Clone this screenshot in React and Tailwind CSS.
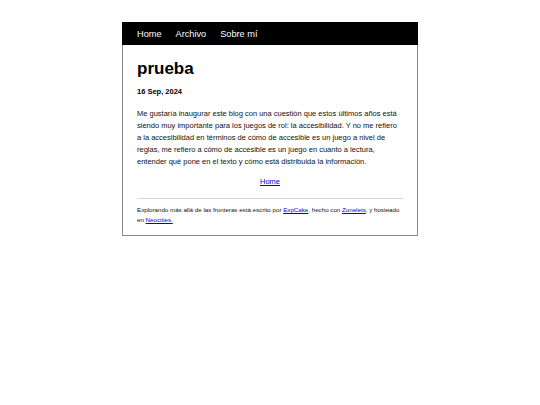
export default function App() {
  return (
    <div className="w-[540px] h-[405px] bg-white" style={{ fontFamily: '"Liberation Sans", Arial, sans-serif' }}>
      <div className="pt-[22px] flex justify-center">
        <div className="w-[296px] border border-[#8a8a8a] bg-white text-[#111]">
          <nav className="h-[23px] bg-black flex items-center px-[14px] gap-[14px] text-white text-[9.2px] -mt-px -mx-px border-t border-black">
            <a className="ml-px pt-px">Home</a>
            <a className="pt-px">Archivo</a>
            <a className="pt-px">Sobre mí</a>
          </nav>
          <div className="px-[14px]">
            <h1 className="mt-[14px] text-[17px] leading-[20px] font-bold text-black">prueba</h1>
            <p className="mt-[8px] text-[7.5px] leading-[10px] font-bold text-black">16 Sep, 2024</p>
            <p className="mt-[11px] text-[7.5px] leading-[12px]">
              Me gustaría inaugurar este blog con una cuestión que estos últimos años está siendo muy importante para los juegos de rol: la accesibilidad. Y no me refiero a la accesibilidad en términos de cómo de accesible es un juego a nivel de reglas, me refiero a cómo de accesible es un juego en cuanto a lectura, entender qué pone en el texto y cómo está distribuida la información.
            </p>
            <div className="mt-[8px] text-center text-[7.5px] leading-[12px]">
              <a className="text-[#0000ee] underline">Home</a>
            </div>
            <div className="mt-[10px] h-px bg-[#d6d6d6]"></div>
            <p className="mt-[6px] pb-[10px] text-[6.2px] leading-[10px]">
              Explorando más allá de las fronteras está escrito por <a className="text-[#0000ee] underline">ExpCake</a>, hecho con <a className="text-[#0000ee] underline">Zonelets</a>, y hosteado en <a className="text-[#0000ee] underline">Neocities.</a>
            </p>
          </div>
        </div>
      </div>
    </div>
  );
}
